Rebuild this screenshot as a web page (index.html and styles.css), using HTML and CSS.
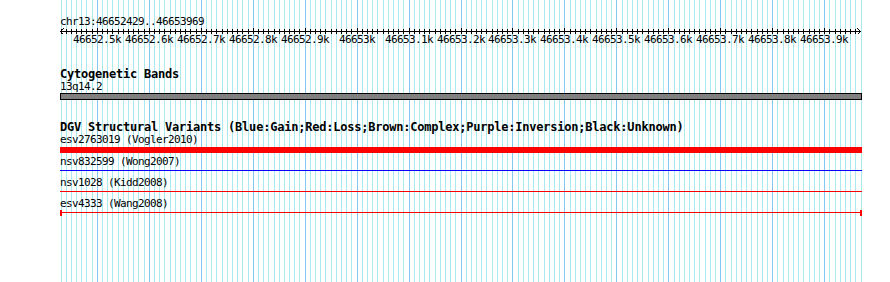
FILE: index.html
```html
<!DOCTYPE html>
<html lang="en">
<head>
  <meta charset="UTF-8">
  <meta name="viewport" content="width=device-width, initial-scale=1.0">
  <title>chr13:46652429..46653969</title>
  <link rel="stylesheet" href="styles.css">
</head>
<body>
  <div class="panel">
    <svg class="grid" id="grid" width="890" height="282"></svg>

    <div class="track ruler">
      <div class="label">chr13:46652429..46653969</div>
      <svg class="ruler-axis" id="axis" width="802" height="7"></svg>
      <div class="ruler-ticks" id="ticks"></div>
    </div>

    <div class="track bands">
      <div class="track-title">Cytogenetic Bands</div>
      <div class="label">13q14.2</div>
      <div class="band"></div>
    </div>

    <div class="track dgv">
      <div class="track-title">DGV Structural Variants (Blue:Gain;Red:Loss;Brown:Complex;Purple:Inversion;Black:Unknown)</div>
      <div class="feature">
        <div class="label">esv2763019 (Vogler2010)</div>
        <div class="glyph bar loss"></div>
      </div>
      <div class="feature">
        <div class="label">nsv832599 (Wong2007)</div>
        <div class="glyph line gain"></div>
      </div>
      <div class="feature">
        <div class="label">nsv1028 (Kidd2008)</div>
        <div class="glyph line loss"></div>
      </div>
      <div class="feature">
        <div class="label">esv4333 (Wang2008)</div>
        <div class="glyph line span loss"></div>
      </div>
    </div>
  </div>

  <script>
    // región visible
    const start = 46652429;
    const end = 46653969;
    const left = 60;
    const scale = 800 / (end - start);
    const ns = 'http://www.w3.org/2000/svg';

    function xOf(pos) {
      return Math.round((pos - start) * scale);
    }

    function rect(svg, x, y, w, h, cls) {
      const r = document.createElementNS(ns, 'rect');
      r.setAttribute('x', x);
      r.setAttribute('y', y);
      r.setAttribute('width', w);
      r.setAttribute('height', h);
      r.setAttribute('class', cls);
      svg.appendChild(r);
    }

    // Líneas de la cuadrícula (cada 10 bp, mayores cada 100 bp)
    const grid = document.getElementById('grid');
    const first = Math.ceil(start / 10) * 10;
    for (let pos = first; pos <= end + 1; pos += 10) {
      if (pos % 100 !== 0) rect(grid, left + xOf(pos), 0, 1, 282, 'minor');
    }
    for (let pos = first; pos <= end + 1; pos += 10) {
      if (pos % 100 === 0) rect(grid, left + xOf(pos), 0, 1, 282, 'major');
    }

    // Regla
    const axis = document.getElementById('axis');
    const ticks = document.getElementById('ticks');
    rect(axis, 0, 3, 801, 1, 'ink');
    for (let pos = first; pos <= end; pos += 10) {
      const x = xOf(pos);
      if (pos % 100 === 0) {
        rect(axis, x, 0, 1, 6, 'ink');
        const label = document.createElement('div');
        label.className = 'tick';
        label.style.left = x + 'px';
        label.textContent = (pos / 1000) + 'k';
        ticks.appendChild(label);
      } else {
        rect(axis, x, 1, 1, 5, 'ink');
      }
    }
    const arrows = document.createElementNS(ns, 'path');
    arrows.setAttribute('d', 'M3.5 0.5 L0.5 3.5 L3.5 6.5 M797.5 0.5 L800.5 3.5 L797.5 6.5');
    arrows.setAttribute('class', 'arrow');
    axis.appendChild(arrows);
  </script>
</body>
</html>
```

FILE: styles.css
```css
/* Estilos base */
body {
  margin: 0;
  background-color: #FFFFFF;
}
.panel {
  position: relative;
  width: 890px;
  height: 282px;
  overflow: hidden;
  font-family: "DejaVu Sans Mono", "Liberation Mono", monospace;
  color: #000000;
}
.grid {
  position: absolute;
  left: 0;
  top: 0;
}
.grid .minor {
  fill: #A8EAF0;
}
.grid .major {
  fill: #84C8F4;
}
.track {
  position: relative;
  margin-left: 60px;
  width: 802px;
}
.label {
  font-size: 11px;
  line-height: 13px;
  letter-spacing: -0.62px;
  white-space: nowrap;
}
.track-title {
  font-size: 12px;
  font-weight: bold;
  line-height: 13px;
  height: 12px;
  letter-spacing: -0.22px;
  white-space: nowrap;
}

/* Regla */
.ruler {
  padding-top: 15px;
}
.ruler-axis {
  display: block;
}
.ruler-axis .ink {
  fill: #000000;
}
.ruler-axis .arrow {
  fill: none;
  stroke: #000000;
  stroke-width: 1;
  shape-rendering: crispEdges;
}
.ruler-ticks {
  position: relative;
  height: 13px;
  margin-top: -2px;
}
.tick {
  position: absolute;
  top: 0;
  font-size: 11px;
  line-height: 13px;
  letter-spacing: -0.62px;
  white-space: nowrap;
  transform: translateX(-50%);
}

/* Bandas citogenéticas */
.bands {
  margin-top: 22px;
}
.band {
  height: 5px;
  border: 1px solid #000000;
  background-color: #808080;
}

/* Variantes estructurales */
.dgv {
  margin-top: 21px;
}
.feature {
  display: flow-root;
}
.feature + .feature {
  margin-top: 2px;
}
.glyph.bar {
  height: 6px;
  margin-top: 1px;
}
.glyph.line {
  height: 1px;
  margin: 2px 0 3px;
}
.gain {
  background-color: #0000FF;
}
.loss {
  background-color: #FF0000;
}
.span {
  position: relative;
}
.span::before,
.span::after {
  content: "";
  position: absolute;
  top: -2px;
  width: 2px;
  height: 6px;
  background-color: #FF0000;
}
.span::before {
  left: 0;
}
.span::after {
  right: 0;
}
```
